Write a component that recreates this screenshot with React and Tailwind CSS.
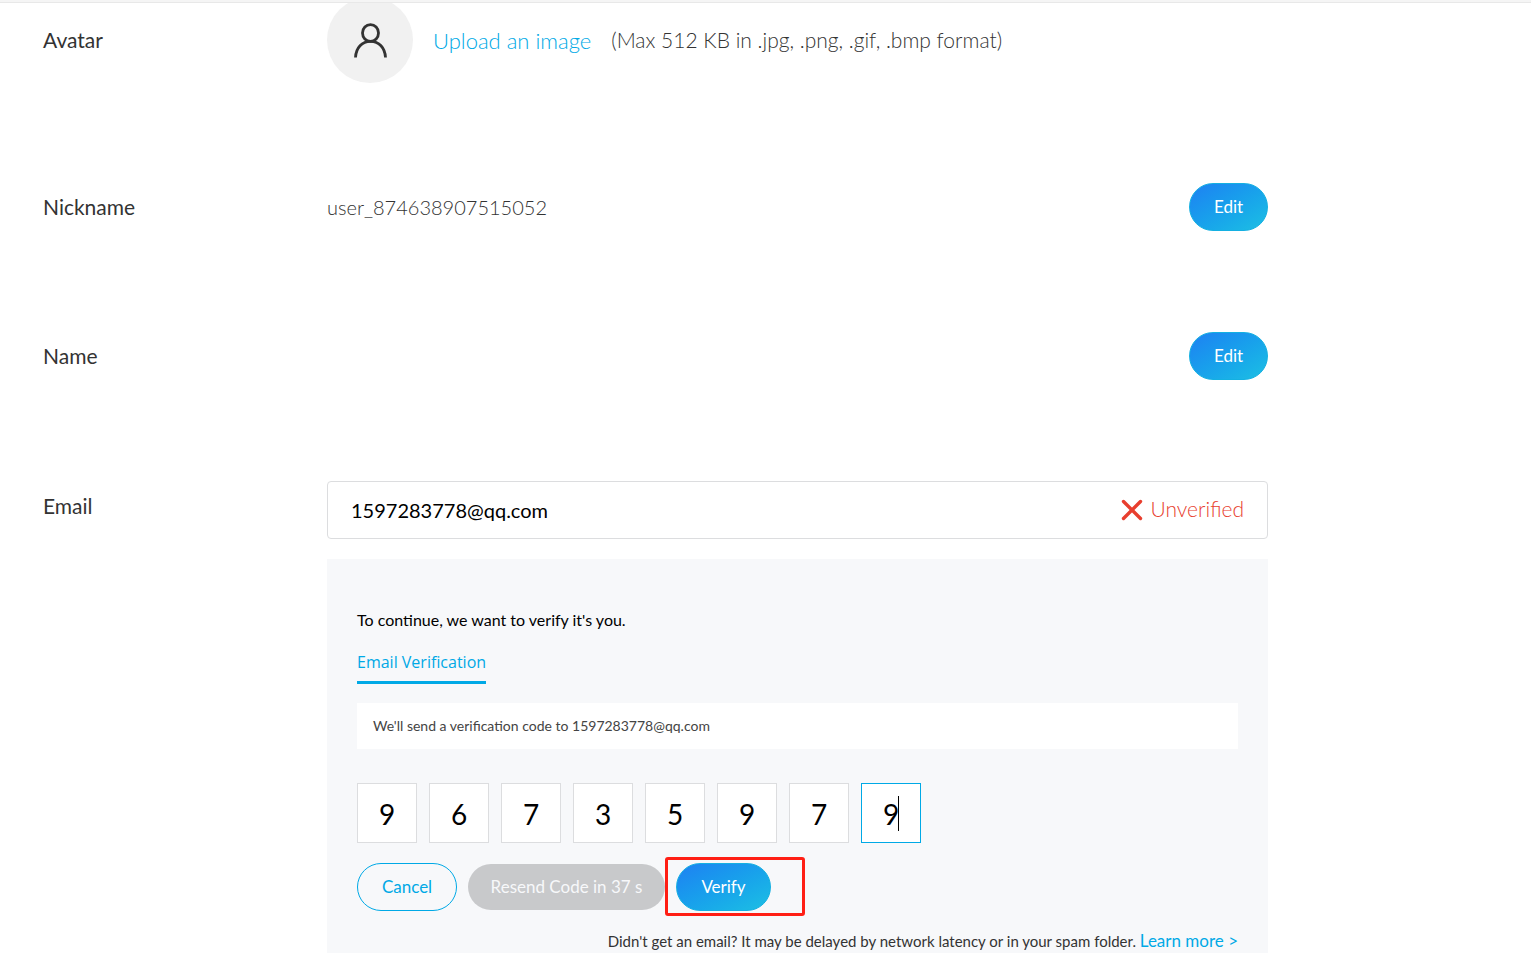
import { useState } from 'react';

const initialCode = ['9', '6', '7', '3', '5', '9', '7', '9'];

const UserIcon = () => (
  <svg width="36" height="36" viewBox="0 0 36 36" fill="none" stroke="#333" strokeWidth="2.8" aria-hidden="true">
    <ellipse cx="18.5" cy="11" rx="8" ry="8.4" />
    <path d="M3.5 35.5C4 25.8 10 19.4 18.5 19.4s14.5 6.4 15 16.1" />
  </svg>
);

const CrossIcon = () => (
  <svg width="22" height="22" viewBox="0 0 22 22" stroke="#e83e2e" strokeWidth="3.4" strokeLinecap="round" aria-hidden="true">
    <path d="M2.5 2.5l17 17M19.5 2.5l-17 17" />
  </svg>
);

const GradientButton = ({ children, className }) => (
  <button
    type="button"
    className={`h-12 rounded-full border border-[#14b0e2] bg-linear-to-br from-[#1f80f2] to-[#1ebfe3] text-[17px] text-white ${className}`}
  >
    {children}
  </button>
);

const Row = ({ label, children }) => (
  <div className="grid grid-cols-[284px_1fr] items-center">
    <h2 className="text-[21px]">{label}</h2>
    <div className="flex items-center justify-between">{children}</div>
  </div>
);

const App = () => {
  const [email, setEmail] = useState('1597283778@qq.com');
  const [code, setCode] = useState(initialCode);

  const handleDigit = (index, value) => {
    setCode(code.map((digit, i) => (i === index ? value : digit)));
  };

  return (
    <div className="min-h-screen bg-white font-[Lato,sans-serif] text-[#333]">
      <header className="relative z-10 h-[3px] border-b border-[#e8e8e8] bg-[#f5f5f5]" />

      <main className="-mt-1.5 flex max-w-[1268px] flex-col pl-[43px]">
        <Row label="Avatar">
          <div className="flex items-center gap-5 text-[21px] font-light">
            <div className="flex size-[86px] items-center justify-center rounded-full bg-[#f1f1f1]">
              <UserIcon />
            </div>
            <a href="#upload" className="text-[22px] text-[#00a9e6]">Upload an image</a>
            <span>(Max 512 KB in .jpg, .png, .gif, .bmp format)</span>
          </div>
        </Row>

        <div className="mt-[100px]">
          <Row label="Nickname">
            <span className="text-xl font-light">user_874638907515052</span>
            <GradientButton className="w-[79px]">Edit</GradientButton>
          </Row>
        </div>

        <div className="mt-[101px]">
          <Row label="Name">
            <span />
            <GradientButton className="w-[79px]">Edit</GradientButton>
          </Row>
        </div>

        <div className="mt-[101px] grid grid-cols-[284px_1fr]">
          <label htmlFor="email" className="pt-[9px] text-[21px]">Email</label>
          <div>
            <div className="flex h-[58px] items-center rounded border border-[#dcdddf] px-[23px]">
              <input
                id="email"
                type="email"
                value={email}
                onChange={(e) => setEmail(e.target.value)}
                className="min-w-0 flex-1 text-xl text-black outline-none"
              />
              <div className="flex items-center gap-2 text-[21px] font-light text-[#e83e2e]">
                <CrossIcon />
                <span className="pb-[3px]">Unverified</span>
              </div>
            </div>

            <section className="mt-5 bg-[#f7f8fa] px-[30px] pt-[49px]">
              <p className="text-base leading-6 text-black">To continue, we want to verify it's you.</p>
              <div className="mt-[18px] flex">
                <button type="button" className="border-b-3 border-[#00a9e6] pb-[7px] font-['Open_Sans',sans-serif] text-base leading-6 font-medium text-[#00a9e6]">
                  Email Verification
                </button>
              </div>
              <p className="mt-[19px] bg-white px-4 py-[13px] text-sm leading-5 text-[#444]">
                We'll send a verification code to 1597283778@qq.com
              </p>

              <div className="mt-[34px] flex gap-3">
                {code.map((digit, i) => (
                  <div key={i} className="relative">
                    <input
                      type="text"
                      maxLength={1}
                      aria-label={`Digit ${i + 1}`}
                      value={digit}
                      onChange={(e) => handleDigit(i, e.target.value)}
                      className={`block size-[60px] border bg-white pt-0.5 text-center text-[28px] text-black outline-none ${
                        i === code.length - 1 ? 'border-[#00a9e6]' : 'border-[#dcdddf]'
                      }`}
                    />
                    {i === code.length - 1 && <span className="absolute top-[13px] left-[37px] h-[35px] w-px bg-black" />}
                  </div>
                ))}
              </div>

              <div className="mt-5 flex items-center">
                <button type="button" className="h-12 w-[100px] rounded-full border border-[#00a9e6] text-[17px] text-[#00a9e6]">
                  Cancel
                </button>
                <button type="button" disabled className="ml-[11px] h-[46px] w-[197px] rounded-full bg-[#c8c9cb] text-[17px] text-[#f7f8fa]">
                  Resend Code in 37 s
                </button>
                <div className="relative ml-[11px]">
                  <GradientButton className="w-[95px]">Verify</GradientButton>
                  <span className="pointer-events-none absolute -top-1.5 -left-[11px] h-[59px] w-[140px] rounded-[3px] border-3 border-[#ff1e14]" />
                </div>
              </div>

              <p className="mt-[18px] pb-px text-right text-[15px] leading-[23px]">
                Didn't get an email? It may be delayed by network latency or in your spam folder.{' '}
                <a href="#learn-more" className="text-[17px] leading-[23px] text-[#00a9e6]">Learn more &gt;</a>
              </p>
            </section>
          </div>
        </div>
      </main>
    </div>
  );
};

export default App;
